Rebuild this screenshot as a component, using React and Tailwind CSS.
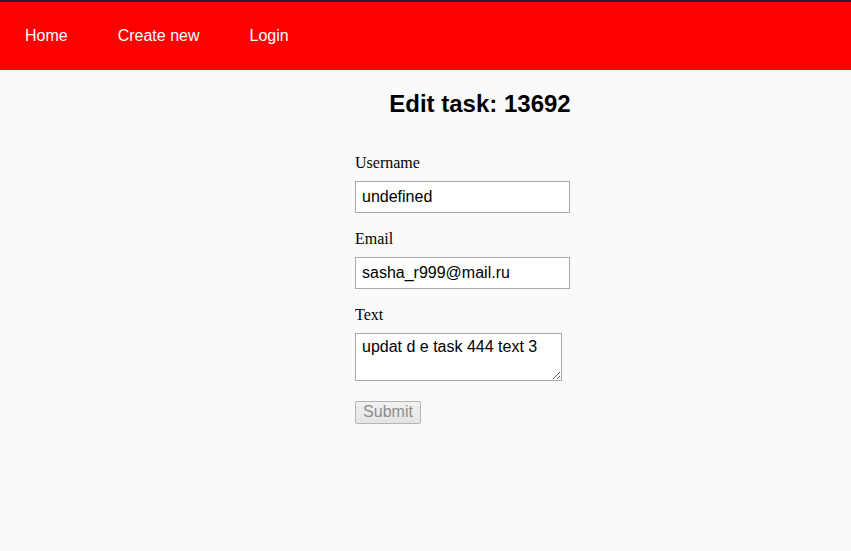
import React from "react";

export default function App() {
  const sans = { fontFamily: '"Liberation Sans", Arial, sans-serif' };
  return (
    <div className="min-h-[551px] bg-[#fafafa]" style={sans}>
      <div className="h-[2px] bg-[#222222]" />
      <nav className="h-[68px] bg-[#ff0000] flex items-center text-white text-[16px]">
        <a className="px-[25px]" href="#">Home</a>
        <a className="px-[25px]" href="#">Create new</a>
        <a className="px-[25px]" href="#">Login</a>
      </nav>
      <div className="ml-[355px] w-[250px] pt-[20px]">
        <h2 className="text-[24px] leading-[28px] font-bold text-black text-center">Edit task: 13692</h2>
        <form className="mt-[36px] flex flex-col text-black">
          <label className="text-[16px] leading-[18px]" style={{ fontFamily: '"Liberation Serif", "Times New Roman", serif' }}>Username</label>
          <input
            className="mt-[9px] w-[215px] h-[32px] bg-white border border-[#a9a9a9] px-[6px] text-[16px] outline-none"
            defaultValue="undefined"
          />
          <label className="mt-[17px] text-[16px] leading-[18px]" style={{ fontFamily: '"Liberation Serif", "Times New Roman", serif' }}>Email</label>
          <input
            className="mt-[9px] w-[215px] h-[32px] bg-white border border-[#a9a9a9] px-[6px] text-[16px] outline-none"
            defaultValue="sasha_r999@mail.ru"
          />
          <label className="mt-[17px] text-[16px] leading-[18px]" style={{ fontFamily: '"Liberation Serif", "Times New Roman", serif' }}>Text</label>
          <textarea
            className="mt-[9px] w-[207px] h-[48px] bg-white border border-[#a9a9a9] px-[6px] pt-[4px] text-[16px] leading-[18px] outline-none"
            defaultValue="updat d e task 444 text 3"
          />
          <div className="mt-[19px]">
            <button
              type="button"
              disabled
              className="w-[66px] h-[23px] border border-[#b4b4b4] rounded-[2px] bg-[linear-gradient(#f2f2f2,#e4e4e4)] text-[#8c8c8c] text-[16px] leading-[20px]"
            >
              Submit
            </button>
          </div>
        </form>
      </div>
    </div>
  );
}
